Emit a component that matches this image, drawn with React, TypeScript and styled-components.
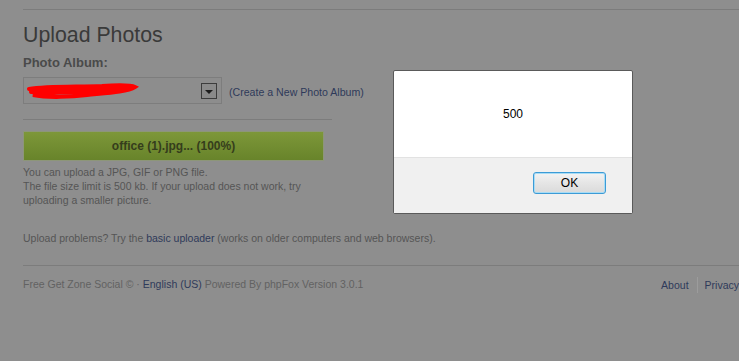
import React from "react";
import styled, { createGlobalStyle } from "styled-components";

const Global = createGlobalStyle`
  html, body { margin: 0; padding: 0; overflow: hidden; }
  body {
    background: #8e8e8e;
    font-family: "Liberation Sans", Arial, sans-serif;
    width: 739px;
    height: 361px;
  }
`;

const Page = styled.div`
  position: relative;
  width: 739px;
  height: 361px;
  overflow: hidden;
`;

const Content = styled.div`
  width: 716px;
  padding: 9px 0 0 23px;
`;

const Rule = styled.div<{ $w?: number }>`
  height: 1px;
  background: #7c7c7c;
  width: ${(p) => (p.$w ? `${p.$w}px` : "100%")};
`;

const Heading = styled.h1`
  margin: 13px 0 0;
  font-size: 21.3px;
  line-height: 24px;
  font-weight: normal;
  color: #3a3a3a;
`;

const Label = styled.div`
  margin-top: 8px;
  font-size: 13px;
  line-height: 16px;
  font-weight: bold;
  color: #4a4a4a;
`;

const SelectRow = styled.div`
  margin-top: 6px;
  display: flex;
  align-items: center;
  gap: 7px;
`;

const Select = styled.div`
  position: relative;
  box-sizing: border-box;
  width: 199px;
  height: 27px;
  border: 1px solid #7d7d7d;
  background: #8d8d8d;
  display: flex;
  align-items: center;
  justify-content: flex-end;
  padding-right: 4px;
`;

const Scribble = styled.svg`
  position: absolute;
  left: 3px;
  top: 5px;
`;

const DropButton = styled.div`
  box-sizing: border-box;
  width: 16px;
  height: 16px;
  border: 1px solid #3c3c3c;
  background: #8a8a8a;
  display: flex;
  align-items: center;
  justify-content: center;
`;

const Arrow = styled.div`
  width: 0;
  height: 0;
  border-left: 4px solid transparent;
  border-right: 4px solid transparent;
  border-top: 4px solid #1e1e1e;
  margin-top: 2px;
`;

const Link = styled.a`
  color: #2f3a5a;
  text-decoration: none;
  cursor: pointer;
`;

const SmallLink = styled(Link)`
  font-size: 10.6px;
  margin-top: 3px;
`;

const Section = styled.div`
  margin-top: 15px;
`;

const Progress = styled.div`
  margin-top: 11px;
  box-sizing: border-box;
  width: 301px;
  height: 30px;
  border: 1px solid #8d9679;
  background: linear-gradient(#7d9739, #68842b);
  display: flex;
  align-items: center;
  justify-content: center;
  font-size: 12px;
  font-weight: bold;
  color: #353d1c;
`;

const Help = styled.p`
  margin: 4px 0 0;
  font-size: 10.5px;
  line-height: 14px;
  color: #555555;
  width: 300px;
`;

const Problems = styled.p`
  margin: 24px 0 0;
  font-size: 10.5px;
  line-height: 14px;
  color: #555555;
`;

const FooterRule = styled(Rule)`
  margin-top: 20px;
`;

const Footer = styled.div`
  margin-top: 11px;
  display: flex;
  justify-content: space-between;
  font-size: 10.5px;
  line-height: 14px;
  color: #626262;
`;

const FooterLinks = styled.div`
  display: flex;
  align-items: center;
`;

const FooterSep = styled.span`
  width: 1px;
  height: 16px;
  background: #9c9c9c;
  margin: 0 7px 0 8px;
`;

const Dialog = styled.div`
  position: absolute;
  left: 393px;
  top: 70px;
  box-sizing: border-box;
  width: 240px;
  height: 144px;
  border: 1px solid #5a5a5a;
  border-radius: 2px;
  background: #ffffff;
  display: flex;
  flex-direction: column;
  font-family: "Liberation Sans", Arial, sans-serif;
`;

const DialogBody = styled.div`
  height: 86px;
  display: flex;
  align-items: center;
  justify-content: center;
  font-size: 12px;
  color: #000;
`;

const DialogFooter = styled.div`
  flex: 1;
  background: #f0f0f0;
  border-top: 1px solid #e2e2e2;
  display: flex;
  justify-content: flex-end;
  align-items: flex-start;
  padding: 14px 26px 0 0;
`;

const OkButton = styled.button`
  box-sizing: border-box;
  width: 73px;
  height: 22px;
  border: 1px solid #3c9bd6;
  border-radius: 3px;
  background: linear-gradient(#f3f3f3, #e5e5e5 50%, #dadada);
  box-shadow: inset 0 0 0 1px #a8dcf5;
  font-family: "Liberation Sans", Arial, sans-serif;
  font-size: 12px;
  color: #000;
  padding: 0;
`;

export default function App() {
  return (
    <>
      <Global />
      <Page>
        <Content>
          <Rule />
          <Heading>Upload Photos</Heading>
          <Label>Photo Album:</Label>
          <SelectRow>
            <Select>
              <Scribble width="112" height="18" viewBox="0 0 112 18">
                <path
                  d="M2 6 C 20 3, 50 4, 75 3 C 90 2, 104 2, 108 4 C 100 9, 80 10, 60 12 C 45 14, 20 15, 6 12 C 20 10, 40 9, 60 9 C 80 8, 95 6, 104 5 M4 9 C 30 6, 60 7, 100 6"
                  fill="none"
                  stroke="#ff0000"
                  strokeWidth="4"
                  strokeLinecap="round"
                />
                <path d="M8 5 L 90 5 L 98 8 L 20 11 Z" fill="#ff0000" />
              </Scribble>
              <DropButton>
                <Arrow />
              </DropButton>
            </Select>
            <SmallLink>(Create a New Photo Album)</SmallLink>
          </SelectRow>
          <Section>
            <Rule $w={309} />
            <Progress>office (1).jpg... (100%)</Progress>
            <Help>
              You can upload a JPG, GIF or PNG file.
              <br />
              The file size limit is 500 kb. If your upload does not work, try
              uploading a smaller picture.
            </Help>
          </Section>
          <Problems>
            Upload problems? Try the <Link>basic uploader</Link> (works on older
            computers and web browsers).
          </Problems>
          <FooterRule />
          <Footer>
            <span>
              Free Get Zone Social © · <Link>English (US)</Link> Powered By phpFox
              Version 3.0.1
            </span>
            <FooterLinks>
              <Link>About</Link>
              <FooterSep />
              <Link>Privacy</Link>
            </FooterLinks>
          </Footer>
        </Content>
        <Dialog>
          <DialogBody>500</DialogBody>
          <DialogFooter>
            <OkButton>OK</OkButton>
          </DialogFooter>
        </Dialog>
      </Page>
    </>
  );
}
